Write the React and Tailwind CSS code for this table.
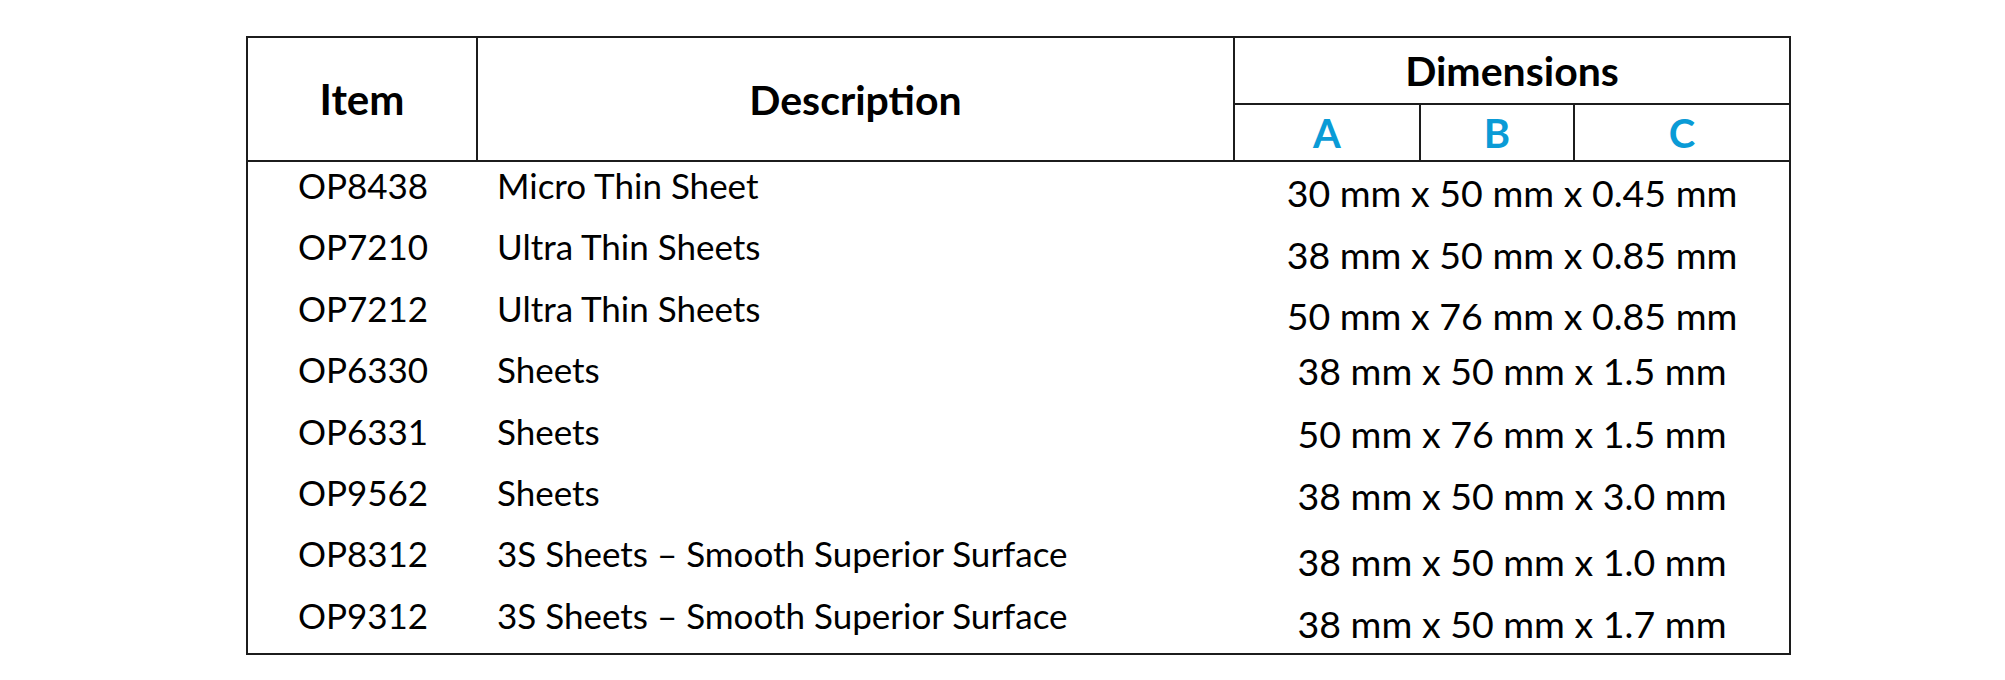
const rows = [
  { item: "OP8438", desc: "Micro Thin Sheet", dims: "30 mm x 50 mm x 0.45 mm", pad: "pt-[12px]" },
  { item: "OP7210", desc: "Ultra Thin Sheets", dims: "38 mm x 50 mm x 0.85 mm", pad: "pt-[13px]" },
  { item: "OP7212", desc: "Ultra Thin Sheets", dims: "50 mm x 76 mm x 0.85 mm", pad: "pt-[12px]" },
  { item: "OP6330", desc: "Sheets", dims: "38 mm x 50 mm x 1.5 mm", pad: "pt-[6px]" },
  { item: "OP6331", desc: "Sheets", dims: "50 mm x 76 mm x 1.5 mm", pad: "pt-[7px]" },
  { item: "OP9562", desc: "Sheets", dims: "38 mm x 50 mm x 3.0 mm", pad: "pt-[8px]" },
  { item: "OP8312", desc: "3S Sheets – Smooth Superior Surface", dims: "38 mm x 50 mm x 1.0 mm", pad: "pt-[13px]" },
  { item: "OP9312", desc: "3S Sheets – Smooth Superior Surface", dims: "38 mm x 50 mm x 1.7 mm", pad: "pt-[13px]" },
];

export default function App() {
  return (
    <div className="w-[2005px] h-[680px] bg-white pt-[36px] pl-[246px] font-['Lato',sans-serif] text-black">
      <div className="w-[1545px] border-2 border-[#1c1c1c]">
        {/* header */}
        <div className="flex h-[124px] border-b-2 border-[#1c1c1c]">
          <div className="w-[230px] border-r-2 border-[#1c1c1c] flex items-center justify-center text-[42px] font-bold leading-none">
            Item
          </div>
          <div className="w-[757px] border-r-2 border-[#1c1c1c] flex items-center justify-center text-[41px] font-bold leading-none">
            Description
          </div>
          <div className="flex-1 flex flex-col">
            <div className="h-[67px] border-b-2 border-[#1c1c1c] flex items-center justify-center text-[41px] font-bold leading-none">
              Dimensions
            </div>
            <div className="flex-1 flex text-[#0a9bd6] text-[40px] font-bold leading-none">
              <div className="w-[186px] border-r-2 border-[#1c1c1c] flex items-center justify-center">A</div>
              <div className="w-[154px] border-r-2 border-[#1c1c1c] flex items-center justify-center">B</div>
              <div className="flex-1 flex items-center justify-center">C</div>
            </div>
          </div>
        </div>
        {/* body */}
        <div className="grid grid-rows-8 h-[491px] text-[35px] leading-none">
          {rows.map((r) => (
            <div key={r.item} className="flex">
              <div className="w-[230px] pt-[6px] text-center">{r.item}</div>
              <div className="w-[757px] pt-[6px] pl-[19px]">{r.desc}</div>
              <div className={`flex-1 text-center text-[37.5px] ${r.pad}`}>{r.dims}</div>
            </div>
          ))}
        </div>
      </div>
    </div>
  );
}
